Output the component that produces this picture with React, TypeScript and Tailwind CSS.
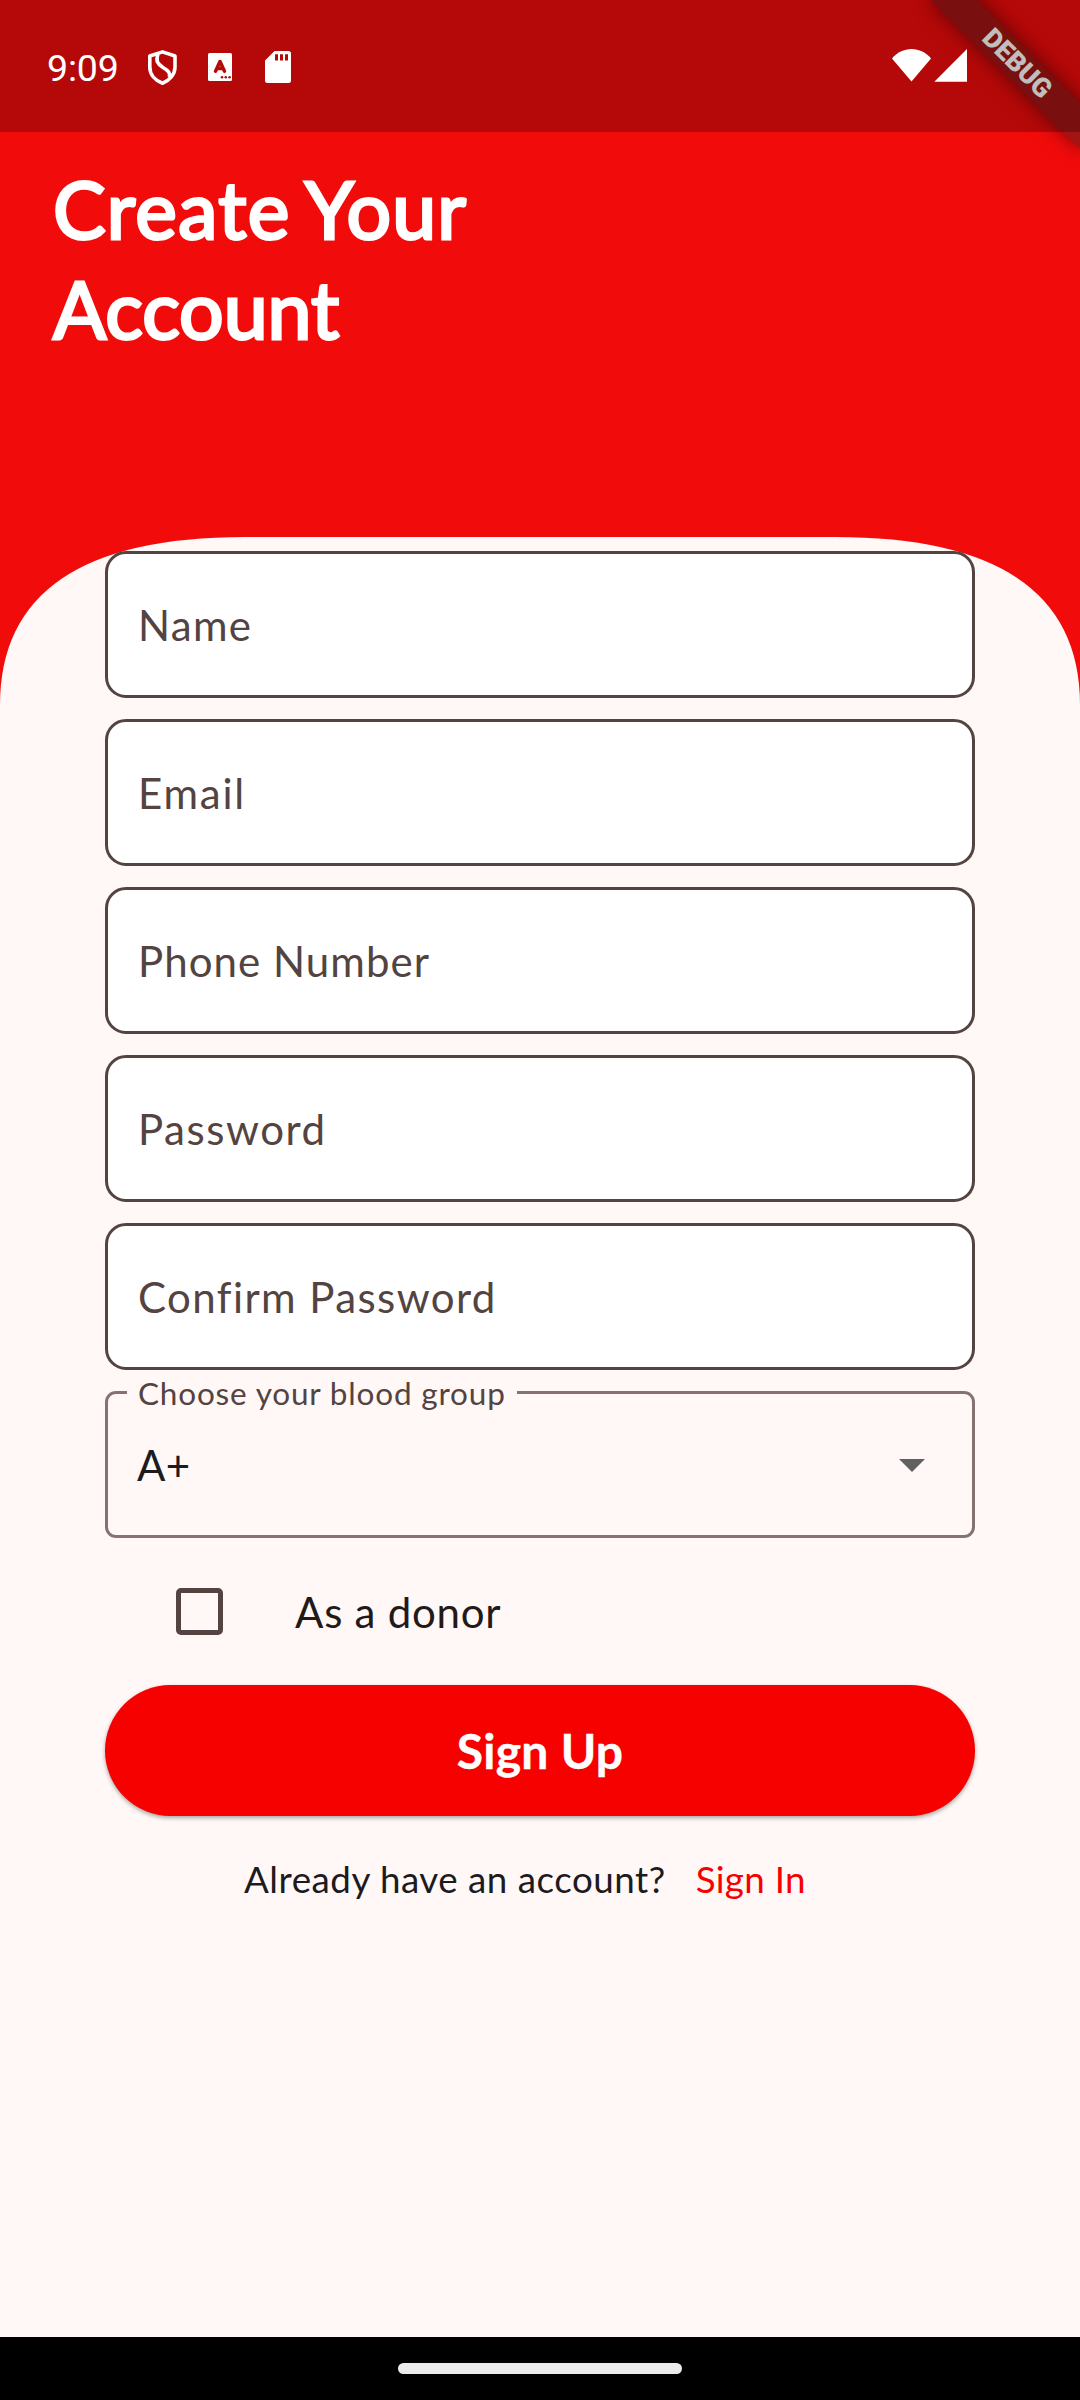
import React from "react";

const fields = [
  { label: "Name", tracking: "tracking-[1.310px]" },
  { label: "Email", tracking: "tracking-[1.800px]" },
  { label: "Phone Number", tracking: "tracking-[1.060px]" },
  { label: "Password", tracking: "tracking-[1.550px]" },
  { label: "Confirm Password", tracking: "tracking-[1.410px]" },
];

function StatusBar() {
  return (
    <div className="relative flex h-[132px] items-start bg-black/25">
      <div className="ml-[47px] mt-[46px] w-[98px] font-[Roboto] text-[37.500px] leading-[44px] tracking-[-0.200px] text-white">9:09</div>
      <svg className="mt-[50px] h-[35px] w-[35px]" viewBox="0 0 35 35" fill="none" stroke="#fff" strokeWidth="3.6" strokeLinejoin="round">
        <path d="M17.500 1.900 L30 6 V17 C30 24.500 24.500 30.500 17.500 33.200 C10 30.500 4.800 24.500 4.800 17 V6 Z" />
        <path d="M13 4 C10.500 11 12.500 14 18 17.500 C24 21 25 23 24.500 27" />
      </svg>
      <svg className="ml-[28px] mt-[53px] h-[28px] w-[24px]" viewBox="0 0 24 28">
        <rect width="24" height="28" rx="1.500" fill="#fff" />
        <path d="M7.500 18.200 L12 8.500 L16.500 18.200 M9 15.500 H15" fill="none" stroke="#b50909" strokeWidth="3.500" strokeLinejoin="round" strokeLinecap="round" />
        <circle cx="14" cy="24.200" r="1.300" fill="#b50909" />
        <circle cx="17.800" cy="24.200" r="1.300" fill="#b50909" />
        <circle cx="21.600" cy="24.200" r="1.300" fill="#b50909" />
      </svg>
      <svg className="ml-[33px] mt-[51px] h-[32px] w-[26px]" viewBox="0 0 26 32">
        <path d="M9.500 0 H23.500 A2.500 2.500 0 0 1 26 2.500 V29.500 A2.500 2.500 0 0 1 23.500 32 H2.500 A2.500 2.500 0 0 1 0 29.500 V9.500 Z" fill="#fff" />
        <path d="M10 3.200h3v6.300h-3zM15 3.200h3v6.300h-3zM20 3.200h3v6.300h-3z" fill="#b50909" />
      </svg>
      <svg className="ml-auto mr-[113px] mt-[49px] h-[33px] w-[75px]" viewBox="0 0 75 33">
        <path d="M19.500 32.500 L0 9.500 C5 3.500 12 0 19.500 0 C27 0 34 3.500 39 9.500 Z" fill="#fff" />
        <path d="M75 0 V32.700 H42.300 Z" fill="#fff" />
      </svg>
    </div>
  );
}

export default function App() {
  return (
    <div className="relative flex h-[2400px] w-[1080px] flex-col overflow-hidden bg-[#fff8f6] font-[Lato,sans-serif]">
      <svg className="absolute left-0 top-0" width="1080" height="712" viewBox="0 0 1080 712">
        <path d="M0 0 H1080 V705 Q1080 537 835 537 H245 Q0 537 0 705 Z" fill="#f20b0b" />
      </svg>
      <div className="absolute right-[-42px] top-[47px] flex h-[32px] w-[210px] rotate-45 items-center justify-center bg-[#a21515] pl-px font-[Roboto] text-[26.800px] font-black leading-none text-white shadow-[0_0_19px_rgba(0,0,0,0.5)]">
        DEBUG
      </div>
      <StatusBar />
      <h1 className="relative ml-[53px] h-[419px] pt-[27px] text-[78.750px] leading-[100.300px] font-normal text-white [-webkit-text-stroke:3px_#fff]">
        <span className="tracking-[1.400px]">Create</span> <span className="ml-[-6px] tracking-[1.100px]">Your</span>
        <br />
        Account
      </h1>
      <main className="relative mx-[105px] flex flex-col">
        <div className="flex flex-col gap-[21px]">
          {fields.map((f) => (
            <div
              key={f.label}
              className={`flex h-[147px] items-center rounded-[21px] border-[3px] border-[#534341] bg-white pl-[30px] pt-[2px] text-[42px] text-[#534341] ${f.tracking}`}
            >
              {f.label}
            </div>
          ))}
          <div className="relative flex h-[147px] items-center rounded-[11px] border-[3px] border-[#857371] pl-[29px] pt-[2px] text-[42px] tracking-[0.400px] text-[#1c1b1f]">
            <span className="absolute left-[19px] top-[-21px] bg-[#fff8f6] px-[11px] text-[31.500px] leading-[40px] tracking-[0.820px] whitespace-nowrap text-[#534341]">
              Choose your blood group
            </span>
            A+
            <svg className="ml-auto mr-[47px]" width="26" height="13" viewBox="0 0 26 13">
              <path d="M0 0 H26 L13 13 Z" fill="#616161" />
            </svg>
          </div>
        </div>
        <div className="flex h-[147px] items-center text-[42px] tracking-[0.750px] text-[#231918]">
          <div className="ml-[71px] mr-[72px] h-[47px] w-[47px] rounded-[5px] border-[5px] border-[#534341]" />
          <span className="pt-[2px]">As a donor</span>
        </div>
        <div className="flex h-[131px] items-center justify-center rounded-full bg-[#f60000] pt-px text-[48px] font-bold tracking-[0.300px] text-white shadow-[0_2px_4px_rgba(0,0,0,0.35)] [-webkit-text-stroke:0.400px_#fff]">
          Sign Up
        </div>
        <div className="ml-[139px] mt-[41px] flex gap-[30px] text-[36.750px] leading-[44px] text-[#1c1b1f]">
          <span className="tracking-[0.510px]">Already have an account?</span>
          <span className="tracking-[0.250px] text-[#f60000]">Sign In</span>
        </div>
      </main>
      <div className="mt-auto flex h-[63px] justify-center bg-black pt-[26px]">
        <div className="h-[11px] w-[284px] rounded-full bg-[#ececec]" />
      </div>
    </div>
  );
}
